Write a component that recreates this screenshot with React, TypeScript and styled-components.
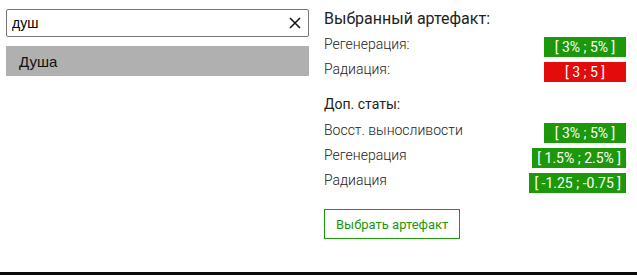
import styled, { createGlobalStyle } from 'styled-components';

const GlobalStyle = createGlobalStyle`
    body {
        margin: 0;
        background: #fff;
        font-family: Roboto, "Liberation Sans", sans-serif;
    }
`

const Page = styled.div`
    display: flex;
    gap: 15px;
    height: 272px;
    padding: 9px 11px 0 6px;
    box-sizing: border-box;
`
const Search = styled.div`
    width: 303px;
    display: flex;
    flex-direction: column;
    gap: 9px;
`
const SearchField = styled.div`
    display: flex;
    align-items: center;
    height: 28px;
    box-sizing: border-box;
    border: 1px solid #767676;
    border-radius: 2px;
    background: #fff;
`
const Input = styled.input`
    flex: 1;
    min-width: 0;
    border: none;
    outline: none;
    padding: 0 5px;
    font-family: "Liberation Sans", Arial, sans-serif;
    font-size: 14px;
    color: #000;
    background: transparent;
`
const ClearButton = styled.button`
    display: flex;
    align-items: center;
    justify-content: center;
    width: 24px;
    height: 26px;
    margin-right: 1px;
    padding: 0;
    border: none;
    background: none;
    cursor: pointer;
`
const ResultItem = styled.div`
    height: 30px;
    display: flex;
    align-items: center;
    padding-left: 13px;
    background: #b0b0b0;
    font-family: "Liberation Sans", Arial, sans-serif;
    font-size: 15px;
    color: #111;
`
const Details = styled.div`
    flex: 1;
    display: flex;
    flex-direction: column;
`
const Title = styled.h2`
    margin: 0 0 6px;
    font-size: 16px;
    line-height: 20px;
    font-weight: 400;
    color: #222;
`
const Subtitle = styled.h3`
    margin: 10px 0 8px;
    font-size: 14px;
    line-height: 18px;
    font-weight: 400;
    color: #222;
`
const StatRow = styled.div`
    display: flex;
    justify-content: space-between;
    align-items: flex-start;
    height: 25px;
`
const StatName = styled.span`
    font-size: 14px;
    line-height: 18px;
    font-weight: 300;
    color: #222;
`
const Range = styled.span<{ $bad?: boolean }>`
    min-width: 82px;
    height: 20px;
    margin-top: 2px;
    padding: 0 5px;
    box-sizing: border-box;
    text-align: center;
    font-size: 14px;
    line-height: 20px;
    color: #fff;
    background: ${p => p.$bad ? '#e30b0b' : '#1c980a'};
`
const SelectButton = styled.button`
    align-self: flex-start;
    margin-top: 13px;
    height: 30px;
    padding: 0 11px;
    border: 1px solid #1c980a;
    background: #fff;
    color: #1c980a;
    font-family: Roboto, sans-serif;
    font-size: 13px;
    cursor: pointer;
`
const Bottom = styled.div`
    height: 3px;
    background: #0a0a0a;
`

type Stat = { name: string; range: string; bad?: boolean }

const mainStats: Stat[] = [
    { name: 'Регенерация:', range: '[ 3% ; 5% ]' },
    { name: 'Радиация:', range: '[ 3 ; 5 ]', bad: true },
]

const extraStats: Stat[] = [
    { name: 'Восст. выносливости', range: '[ 3% ; 5% ]' },
    { name: 'Регенерация', range: '[ 1.5% ; 2.5% ]' },
    { name: 'Радиация', range: '[ -1.25 ; -0.75 ]' },
]

export default function App() {
    return (
    <>
        <GlobalStyle />
        <Page>
            <Search>
                <SearchField>
                    <Input defaultValue="душ" />
                    <ClearButton aria-label="Очистить">
                        <svg width="12" height="12" viewBox="0 0 12 12">
                            <path d="M1 1L11 11M11 1L1 11" stroke="#111" strokeWidth="1.5" />
                        </svg>
                    </ClearButton>
                </SearchField>
                <ResultItem>Душа</ResultItem>
            </Search>
            <Details>
                <Title>Выбранный артефакт:</Title>
                {mainStats.map(s => (
                    <StatRow key={s.name}>
                        <StatName>{s.name}</StatName>
                        <Range $bad={s.bad}>{s.range}</Range>
                    </StatRow>
                ))}
                <Subtitle>Доп. статы:</Subtitle>
                {extraStats.map(s => (
                    <StatRow key={s.name}>
                        <StatName>{s.name}</StatName>
                        <Range>{s.range}</Range>
                    </StatRow>
                ))}
                <SelectButton>Выбрать артефакт</SelectButton>
            </Details>
        </Page>
        <Bottom />
    </>
    );
}
